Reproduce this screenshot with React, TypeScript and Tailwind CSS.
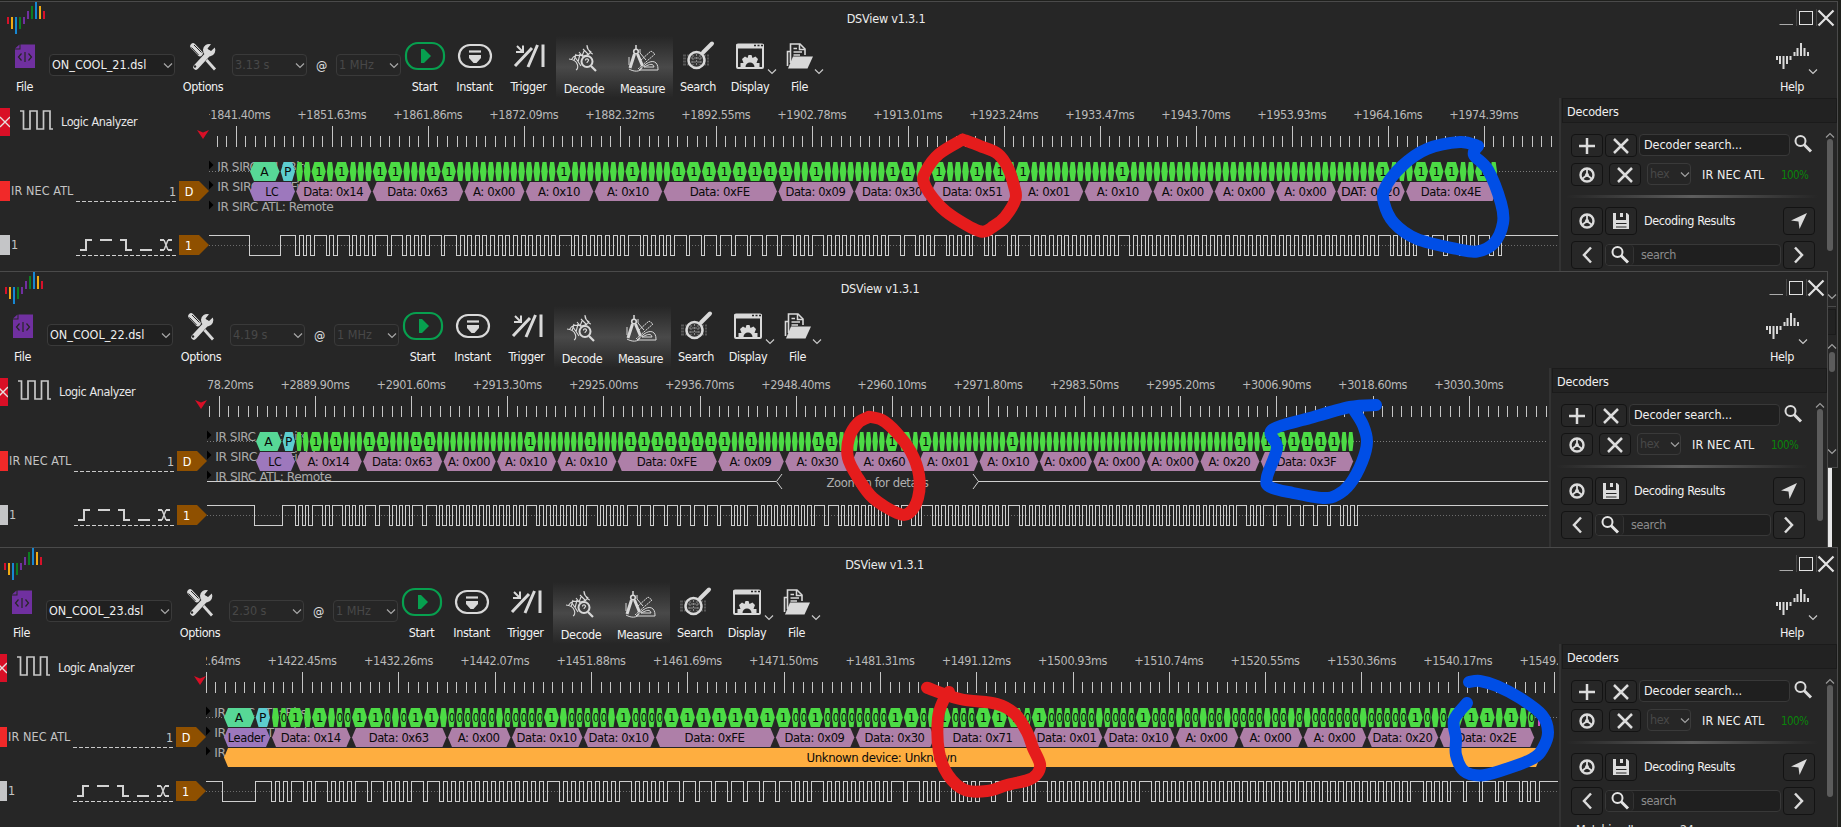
import type { ReactNode } from "react";

type Capture = {
  file: string;
  duration: string;
  x0: number;
  width: number;
  tick0: number;
  tickPitch: number;
  firstMs: number;
  stepMs: number;
  bytes: string[];
  start: number;
  unit: number;
  leader: [number, number];
  split: number;
  leaderText: string;
  low: number;
  rise: number;
  plainZeros?: number[];
};

const captures: Capture[] = [
  {
    file: "ON_COOL_21.dsl", duration: "3.13 s", x0: 209, width: 1349,
    tick0: 236.3, tickPitch: 96, firstMs: 1841.4, stepMs: 10.23,
    bytes: ["D14", "D63", "A00", "A10", "A10", "DFE", "D09", "D30", "D51", "A01", "A10", "A00", "A00", "A00", "T20", "D4E"],
    start: 296.2, unit: 7.655, leader: [250, 295], split: 280, leaderText: "LC", low: 249.5, rise: 280.5,
  },
  {
    file: "ON_COOL_22.dsl", duration: "4.19 s", x0: 207, width: 1341,
    tick0: 219.3, tickPitch: 96.15, firstMs: 2878.2, stepMs: 11.7,
    bytes: ["A14", "D63", "A00", "A10", "A10", "DFE", "A09", "A30", "A60", "A01", "A10", "A00", "A00", "A00", "A20", "D3F"],
    start: 296.2, unit: 6.699, leader: [256, 295], split: 282, leaderText: "LC", low: 254.5, rise: 282.5,
  },
  {
    file: "ON_COOL_23.dsl", duration: "2.30 s", x0: 206, width: 1352,
    tick0: 206.3, tickPitch: 96.3, firstMs: 1412.64, stepMs: 9.81,
    bytes: ["D14", "D63", "A00", "D10", "D10", "DFE", "D09", "D30", "D71", "D01", "D10", "A00", "A00", "A00", "D20", "D2E"],
    start: 272, unit: 7.998, leader: [224, 270], split: 255, leaderText: "Leader", low: 222.5, rise: 255.5,
    plainZeros: [0, 3, 5, 11, 15, 22, 29, 35, 63, 79, 88, 91, 94, 99, 102, 104, 111, 119, 124, 126],
  },
];

const hex = (a: number, b: number, y: number, h: number) => {
  const t = Math.min(4, (b - a) * 0.2);
  const m = y + h / 2;
  return `${a},${m} ${a + t},${y} ${b - t},${y} ${b},${m} ${b - t},${y + h} ${a + t},${y + h}`;
};

function Label({ x, y, w, anchor = "middle", fill = "#0a0a0a", children }: { x: number; y: number; w: number; anchor?: "start" | "middle"; fill?: string; children: string }) {
  return (
    <text x={x} y={y} textAnchor={anchor} fill={fill} fontSize={12.5} textLength={w} lengthAdjust="spacingAndGlyphs">
      {children}
    </text>
  );
}

function Trace({ c, index }: { c: Capture; index: number }) {
  const end = c.x0 + c.width;
  const ticks: ReactNode[] = [];
  for (let i = -3; i < 145; i++) {
    const x = Math.floor(c.tick0 + (i * c.tickPitch) / 10);
    if (x < c.x0 || x >= end) continue;
    ticks.push(<rect key={i} x={x} y={i % 10 === 0 ? 126 : 136} width={1} height={i % 10 === 0 ? 21 : 11} fill="#c6c6c6" />);
  }
  const times: ReactNode[] = [];
  for (let i = 0; i < 15 && c.tick0 + i * c.tickPitch < end; i++) {
    times.push(
      <Label key={i} x={c.tick0 + i * c.tickPitch - 0.5} y={119} w={69} fill="#b9b9b9">
        {`+${(c.firstMs + i * c.stepMs).toFixed(2)}ms`}
      </Label>,
    );
  }
  let x = c.start;
  let n = 0;
  let wave = `M${c.x0} 235.5H${c.low}V255.5H${c.rise}V235.5`;
  const bits: ReactNode[] = [];
  const data: ReactNode[] = [];
  for (const item of c.bytes) {
    const v = parseInt(item.slice(1), 16);
    const from = x;
    for (let b = 0; b < 8; b++, n++) {
      const one = (v >> b) & 1;
      const w = c.unit * (one ? 2 : 1);
      bits.push(<polygon key={n} points={hex(x, x + w - 1, 162, 19)} fill="#4cdb45" />);
      if (one) bits.push(<Label key={`t${n}`} x={x + w / 2 - 0.5} y={176} w={7}>1</Label>);
      else if (c.plainZeros && !c.plainZeros.includes(n)) bits.push(<Label key={`t${n}`} x={x + w / 2 - 0.2} y={176} w={6}>0</Label>);
      const down = Math.floor(x - 0.6) + 0.5;
      const up = Math.floor(x - 0.6 + c.unit * 0.48) + 0.5;
      wave += `H${down}V255.5H${up}V235.5`;
      x += w;
    }
    const kind = item[0];
    data.push(<polygon key={`h${n}`} points={hex(from, x - 1.5, 182, 19)} fill="#ae7fa8" />);
    data.push(
      <Label key={`d${n}`} x={(from + x) / 2 - 1.3} y={196} w={kind === "D" ? 60 : kind === "T" ? 59 : 42}>
        {`${kind === "D" ? "Data" : kind === "T" ? "DAT" : "A"}: 0x${item.slice(1)}`}
      </Label>,
    );
  }
  wave += `H${Math.floor(x) + 0.5}V255.5H${Math.floor(x + c.unit * 0.5) + 0.5}V235.5H${end}`;
  const lx = c.x0 + 8.3;
  return (
    <svg width={c.width} height={173} viewBox={`${c.x0} 98 ${c.width} 173`} className="block shrink-0">
      {times}
      <g shapeRendering="crispEdges">{ticks}</g>
      <path d={`M${c.x0} 171.5H${end}`} stroke="#7c7c7c" strokeDasharray="1 2" shapeRendering="crispEdges" />
      <Label x={lx} y={170.5} w={92} anchor="start" fill="#a9a9a9">IR SIRC ATL: Bits</Label>
      <Label x={lx} y={190.5} w={106} anchor="start" fill="#a9a9a9">IR SIRC ATL: Fields</Label>
      <Label x={lx} y={210.5} w={116} anchor="start" fill="#a9a9a9">IR SIRC ATL: Remote</Label>
      {[165, 185, 205].map((y) => (
        <polygon key={y} points={`${c.x0},${y - 4.5} ${c.x0 + 4.5},${y} ${c.x0},${y + 4.5}`} fill="#000" />
      ))}
      <rect x={c.split - 22} y={170} width={x - c.split + 20} height={3} fill="#262626" />
      <polygon points={hex(c.leader[0], c.split - 0.5, 162, 19)} fill="#57d896" />
      <Label x={(c.leader[0] + c.split) / 2 - 0.7} y={176} w={8}>A</Label>
      <polygon points={hex(c.split + 0.7, c.leader[1], 162, 19)} fill="#5ccdcf" />
      <Label x={(c.split + c.leader[1]) / 2} y={176} w={7}>P</Label>
      <polygon points={hex(c.leader[0], c.leader[1], 182, 19)} fill="#9d78bd" />
      <Label x={(c.leader[0] + c.leader[1]) / 2 - 0.7} y={196} w={c.leaderText === "LC" ? 13 : 37}>{c.leaderText}</Label>
      {bits}
      {data}
      {index === 1 && (
        <g fill="none" stroke="#d0d0d0">
          <path d="M207 211.5H776M978 211.5H1549" shapeRendering="crispEdges" />
          <path d="M782 204L776.5 211.5L782 219M973 204L978.500 211.5L973 219" />
        </g>
      )}
      {index === 1 && <Label x={877.500} y={217} w={102} fill="#b0b0b0">Zoom in for details</Label>}
      {index === 2 && (
        <g>
          <polygon points={hex(224, 1540, 202, 19)} fill="#feae40" />
          <rect x={1538} y={163} width={2} height={17} fill="#d24fc4" />
          <Label x={881.500} y={215.5} w={150}>Unknown device: Unknown</Label>
        </g>
      )}
      <path d={`M${c.x0} 245.5H${end}`} stroke="#6c6c6c" strokeDasharray="1 2" shapeRendering="crispEdges" />
      <path d={wave} fill="none" stroke="#cfcfcf" shapeRendering="crispEdges" />
    </svg>
  );
}

function Chevron({ className = "" }: { className?: string }) {
  return (
    <svg width="10" height="7" viewBox="0 0 10 7" className={className} fill="none" stroke="currentColor" strokeWidth="1.2">
      <path d="M1 1.500L5 5.500L9 1.500" />
    </svg>
  );
}

function Combo({ text, className, dim = false }: { text: string; className: string; dim?: boolean }) {
  return (
    <div className={`mt-[18px] flex h-[22px] shrink-0 items-center justify-between rounded-sm border border-[#3a3a3a] pr-[1px] pl-[2px] tracking-[0px] whitespace-nowrap ${dim ? "bg-[#262626] text-[#484848]" : "bg-[#202020] text-[#efefef]"} ${className}`}>
      {text}
      <Chevron className="text-[#a8a8a8]" />
    </div>
  );
}

function Tool({ label, className, children, arrow = false, active = false }: { label: string; className: string; children: ReactNode; arrow?: boolean; active?: boolean }) {
  return (
    <div className={`relative flex h-[62px] shrink-0 flex-col items-center ${active ? "bg-linear-to-b from-[#262626] via-[#494949] to-[#262626] pt-[2px] pr-[2px]" : ""} ${className}`}>
      <svg width="42" height="36" viewBox="0 0 42 36" className="mt-[2px] shrink-0 text-[#d9d9d9]" fill="none" stroke="currentColor">
        {children}
      </svg>
      <span className="mt-[5px] leading-4 text-[#f2f2f2]">{label}</span>
      {arrow && <Chevron className="absolute right-0 bottom-[23px] text-[#c8c8c8]" />}
    </div>
  );
}

function Logo() {
  const bars: [number, number, number, string][] = [
    [7, 15, 7, "#d7112a"], [11, 15, 12, "#f2ab13"], [15, 15, 17, "#1787d2"], [19, 15, 12, "#0c7c21"], [23, 15, 7, "#7030a0"],
    [27, 9, 8, "#7030a0"], [31, 4, 13, "#0c7c21"], [35, 0, 17, "#1787d2"], [39, 4, 13, "#f2ab13"], [43, 9, 8, "#d7112a"],
  ];
  return (
    <svg width="48" height="34" viewBox="0 0 48 34" className="shrink-0">
      {bars.map(([x, y, h, fill]) => <rect key={x} x={x} y={y} width={2} height={h} fill={fill} />)}
    </svg>
  );
}

function TitleBar() {
  return (
    <div className="flex h-[34px] shrink-0">
      <Logo />
      <div className="-ml-[50px] flex-1 pt-[9px] text-center leading-4 tracking-[-0.2px] text-[#ececec]">DSView v1.3.1</div>
      <svg width="63" height="30" viewBox="0 0 63 30" className="shrink-0" fill="none" stroke="#e2e2e2">
        <path d="M5.500 22.500H19" stroke="#aaa" />
        <path d="M22.500 7V24M42.500 7V24" stroke="#484848" />
        <rect x="25.500" y="9.500" width="13" height="13" />
        <path d="M44.500 8.500L59.500 23.500M59.500 8.500L44.500 23.500" strokeWidth="2.200" />
      </svg>
    </div>
  );
}

function Toolbar({ c }: { c: Capture }) {
  return (
    <div className="flex h-[62px] shrink-0 pl-[3px]">
      <Tool label="File" className="w-[43px]">
        <g stroke="none">
          <path d="M16.500 6.500H31V30H11V11.500H16.500Z" fill="#7030a0" />
          <path d="M11 10.500L15.500 6.500V10.500Z" fill="#7030a0" />
        </g>
        <path d="M17.500 15.500L14.500 19L17.500 22.500M24.500 15.500L27.500 19L24.500 22.500M21 14V24" stroke="#262626" strokeWidth="1.200" />
      </Tool>
      <Combo text={c.file} className="ml-[3px] w-[126px]" />
      <Tool label="Options" className="ml-[4px] w-[48px]">
        <path d="M14 29L27 15" strokeWidth="5.500" strokeLinecap="round" />
        <path d="M32.800 9.500L28.500 13.500L25.500 10.500L29 6.200A6.200 6.200 0 1 0 32.800 9.500Z" fill="currentColor" stroke="none" />
        <circle cx="13" cy="28.500" r="1.200" fill="#262626" stroke="none" />
        <path d="M11 8L18 15.500" strokeWidth="5.500" strokeLinecap="round" />
        <path d="M9.500 9.500L16.500 17M12 7L19.500 14.500" stroke="#262626" strokeWidth="1" />
        <path d="M24.500 22L33 31.500" strokeWidth="2.800" />
      </Tool>
      <Combo text={c.duration} className="ml-[5px] w-[75px]" dim />
      <div className="mt-[22px] w-[29px] shrink-0 text-center leading-4 text-[#e0e0e0]">@</div>
      <Combo text="1 MHz" className="w-[65px]" dim />
      <Tool label="Start" className="w-[47px]">
        <rect x="2" y="5" width="38" height="26" rx="12" stroke="#07a04f" strokeWidth="2.200" />
        <path d="M17 11V25L20 25L27 18L20 11Z" fill="#07a04f" stroke="none" />
      </Tool>
      <Tool label="Instant" className="w-[53px]">
        <rect x="5" y="7" width="32" height="22" rx="11" strokeWidth="2.200" />
        <path d="M15 13.500H27" strokeWidth="2.200" />
        <path d="M15 17H27V20L22.500 25H19.500L15 20Z" fill="currentColor" stroke="none" />
      </Tool>
      <Tool label="Trigger" className="w-[55px]">
        <path d="M7 28L24 10M20 29L29.500 7M35 6.500V29" strokeWidth="3" />
        <path d="M9 8L14.500 13.500M8 14H15V7.500" strokeWidth="2" />
      </Tool>
      <Tool label="Decode" className="w-[58px]" active>
        <path d="M6 19C16 20 16 29 13 30M8.500 19.500C14 10 20 21 28 12C24 9 24 8 24 5M24 5C25 12 29 14 30 14M12 17L18 26M16 12L21 18M20 9L26 15M13 14L11 21M17 14L15 22M21 11L19 16" strokeWidth="1.100" />
        <circle cx="24" cy="21.500" r="5.500" strokeWidth="2" fill="#404040" />
        <path d="M28 26L33 31" strokeWidth="2.200" />
        <path d="M22.500 20.500C22.500 18 25.800 18.500 25.500 20.500C25.200 21.500 24 21.500 24 23" strokeWidth="1.200" />
      </Tool>
      <Tool label="Measure" className="w-[59px]" active>
        <path d="M14 5V9" strokeWidth="1.500" />
        <circle cx="14" cy="11.500" r="2.300" strokeWidth="1.600" />
        <path d="M12.500 14L8 28M15.500 14L20.500 26" strokeWidth="3" />
        <path d="M7 29C12 32 18 32 20 28M7 17V25M18 13L24 20M18 9V13M17 30H36V29C36 22 31 19 24 24L17 30M22 27H32C31 23 28 24 22 27" strokeWidth="1" />
        <path d="M16 29L33 14L29 11L19 20" strokeWidth="1" strokeDasharray="2 .6" />
      </Tool>
      <Tool label="Search" className="w-[50px]">
        <path d="M6 17.500H32M6 20.500H32M6 23.500H32M6 26.500H32" strokeWidth="2" stroke="#565656" strokeDasharray="3 1" />
        <circle cx="19.500" cy="22" r="8" strokeWidth="2.500" fill="#353535" />
        <path d="M16 17V27M19.500 16V28M23 17V27M14 20H25M14 24H25" stroke="#888" strokeDasharray="2 1" />
        <path d="M26 14.500L35 5.500" strokeWidth="4" strokeLinecap="round" />
      </Tool>
      <Tool label="Display" className="w-[54px]" arrow>
        <rect x="8" y="6.500" width="26" height="23.500" rx="1" strokeWidth="2" />
        <path d="M7 8.500H35" strokeWidth="4" />
        <path d="M25 7.500H27M28.500 7.500H30.500M32 7.500H34" stroke="#262626" strokeWidth="1.500" />
        <path d="M11.500 29V25H14.500L13 21L16 18.500L18.500 20L19.500 17H22.500L23.500 20L26.500 18.500L29 21L27.500 25H30.500V29H25.500A4.500 4.500 0 0 0 16.500 29Z" fill="currentColor" stroke="none" />
      </Tool>
      <Tool label="File" className="w-[47px] pr-[2px]" arrow>
        <path d="M8.500 28V13.500H12M11.500 25V6H21L26 11V17" strokeWidth="1.600" />
        <path d="M20.500 6V11.500H26M14.500 10.500H18M14.500 14H23M14.500 17H21" strokeWidth="1.500" />
        <path d="M14 18.500H34L28.500 30.500H9Z" fill="currentColor" stroke="none" />
      </Tool>
      <div className="flex-1" />
      <Tool label="Help" className="mr-[19px] w-[52px]" arrow>
        <path d="M6 18V22M9 18V26M12.500 18V31M16 18V26M19.500 18V22M23.500 14V18M26.500 10V18M30 5V18M33.500 10V18M37 14V18" strokeWidth="2" />
      </Tool>
    </div>
  );
}

function Tag({ text }: { text: string }) {
  return (
    <svg width="30" height="20" viewBox="0 0 30 20" className="ml-[3px] shrink-0">
      <path d="M0 0H20L30 10L20 20H0Z" fill="#8f5000" />
      <text x={text === "1" ? 9.500 : 10} y="14.500" textAnchor="middle" fontSize="12.500" fill="#fff">{text}</text>
    </svg>
  );
}

function ChannelPanel() {
  return (
    <div className="flex w-[209px] shrink-0 flex-col text-[#c4c4c4]">
      <div className="flex h-[49px] items-start">
        <svg width="10" height="28" viewBox="0 0 10 28" className="mt-[10px] shrink-0">
          <rect width="10" height="28" fill="#d90f26" />
          <path d="M0 9L10 19M10 9L0 19" stroke="#e8e0e0" strokeWidth="1.300" />
        </svg>
        <svg width="34" height="22" viewBox="0 0 34 22" className="mt-[11px] ml-[10px] shrink-0" fill="none" stroke="#c8c8c8" strokeWidth="1.700">
          <path d="M0 2H3.500V20H10V2H17V20H23.500V2H30V20H33" />
        </svg>
        <span className="mt-[16px] ml-[7px] w-[136px] leading-4 text-[#e6e6e6]">Logic Analyzer</span>
        <svg width="12" height="10" viewBox="0 0 12 10" className="mt-[31px] shrink-0">
          <path d="M0 1L6 3.500L12 1L6 10Z" fill="#d90f26" />
        </svg>
      </div>
      <div className="mt-[34px] flex h-[21px] items-start">
        <div className="h-[20px] w-[10px] bg-[#f12929]" />
        <span className="w-[66px] pt-[2px] pl-px leading-4 tracking-[0.1px] whitespace-nowrap">IR NEC ATL</span>
        <svg width="100" height="21" viewBox="0 0 100 21" className="shrink-0">
          <path d="M0 20.500H100" stroke="#c8c8c8" strokeDasharray="4 2" />
          <text x="93" y="15" fontSize="12.500" fill="#c4c4c4">1</text>
        </svg>
        <Tag text="D" />
      </div>
      <div className="mt-[33px] flex h-[21px] items-start">
        <div className="h-[20px] w-[10px] bg-[#c4c5c7]" />
        <span className="w-[66px] pt-[2px] pl-px leading-4">1</span>
        <svg width="100" height="21" viewBox="0 0 100 21" className="shrink-0" fill="none" stroke="#d2d2d2">
          <path d="M0 20.500H100" strokeDasharray="4 2" />
          <path d="M4 15H10V5H16M24 5H36M44 5H50V15H56M64 15H76M84 5H88M92 5H96M84 15H88M92 15H96" strokeWidth="2" />
          <path d="M88 5L92 15M92 5L88 15" strokeWidth="1.500" />
        </svg>
        <Tag text="1" />
      </div>
    </div>
  );
}

function Btn({ className = "", children }: { className?: string; children: ReactNode }) {
  return (
    <div className={`flex w-[32px] shrink-0 items-center justify-center rounded-[4px] border border-[#131313] bg-[#272727] ${className}`}>
      <svg width="20" height="20" viewBox="0 0 20 20" fill="none" stroke="#dcdcdc" strokeWidth="2.500">{children}</svg>
    </div>
  );
}

const plus = <path d="M2 10H18M10 2V18" />;
const cross = <path d="M3 3L17 17M17 3L3 17" />;
const wheel = (
  <>
    <circle cx="10" cy="10" r="6.500" strokeWidth="2.400" />
    <path d="M10 10V4M10 10L5 14M10 10L15 14" strokeWidth="1.800" />
    <circle cx="10" cy="10" r="2" fill="#dcdcdc" stroke="none" />
  </>
);
const lens = (
  <>
    <circle cx="7.500" cy="7" r="5" strokeWidth="2" />
    <path d="M11 10.500L18 17.500" strokeWidth="3" />
  </>
);

function ScrollBar() {
  return (
    <div className="flex w-[15px] shrink-0 flex-col items-center pt-[9px] text-[#999]">
      <Chevron className="rotate-180" />
      <div className="h-[112px] w-[6px] rounded-full bg-[#5c5c5c]" />
    </div>
  );
}

function Dock() {
  return (
    <div className="flex w-[275px] shrink-0 flex-col text-[#f0f0f0]">
      <div className="h-[25px] shrink-0 border border-[#1b1b1b] bg-[#222] pt-[5px] pl-[4px] leading-4 tracking-[-0.2px]">Decoders</div>
      <div className="flex flex-1">
        <div className="flex w-[260px] shrink-0 flex-col pl-[9px]">
          <div className="mt-[11px] flex h-[23px]">
            <Btn>{plus}</Btn>
            <Btn className="ml-[2px]">{cross}</Btn>
            <div className="ml-[2px] h-[22px] w-[151px] rounded-sm border border-[#383838] bg-[#1f1f1f] pt-[2px] pl-[4px] leading-4 tracking-[-0.05px]">Decoder search...</div>
            <svg width="20" height="20" viewBox="0 0 20 20" className="ml-[3px]" fill="none" stroke="#dcdcdc">{lens}</svg>
          </div>
          <div className="mt-[6px] flex h-[23px]">
            <Btn>{wheel}</Btn>
            <Btn className="ml-[6px]">{cross}</Btn>
            <div className="ml-[6px] flex h-[22px] w-[44px] items-center justify-between rounded-sm border border-[#3a3a3a] pl-[2px] text-[#484848]">
              hex
              <Chevron className="text-[#a0a0a0]" />
            </div>
            <span className="mt-[4px] ml-[11px] w-[79px] leading-4 tracking-[0.1px]">IR NEC ATL</span>
            <span className="mt-[4px] text-[11.500px] leading-4 tracking-[-0.6px] text-[#0a840a]">100%</span>
          </div>
          <div className="mt-[9px] -ml-[5px] h-[3px] w-[252px] bg-linear-to-r from-[#262626] via-[#5e5e5e] to-[#262626]" />
          <div className="mt-[9px] flex h-[28px]">
            <Btn>{wheel}</Btn>
            <Btn className="ml-[2px]">
              <path d="M2 2H5V9H15V2H16L18 4V18H2Z" fill="#dcdcdc" stroke="none" />
              <path d="M10.500 2V6" strokeWidth="3" />
              <path d="M5 12.500H15.500M5 16H15.500" stroke="#262626" strokeWidth="1.200" />
            </Btn>
            <span className="mt-[6px] ml-[7px] w-[139px] leading-4 tracking-[-0.4px]">Decoding Results</span>
            <Btn>
              <path d="M18 2L2 9.500L9.500 10.500L10.500 18Z" fill="#dcdcdc" stroke="none" />
            </Btn>
          </div>
          <div className="mt-[6px] flex h-[28px]">
            <Btn><path d="M14 2.500L7 10L14 17.500" /></Btn>
            <div className="mt-[3px] ml-[2px] flex h-[22px] w-[176px] rounded-sm border border-[#383838] bg-[#1f1f1f]">
              <div className="flex w-[28px] justify-center rounded-[4px] border-r border-[#333] bg-[#232323]">
                <svg width="20" height="20" viewBox="0 0 20 20" fill="none" stroke="#e4e4e4">{lens}</svg>
              </div>
              <span className="mt-[2px] ml-[7px] leading-4 text-[#8c8c8c]">search</span>
            </div>
            <Btn className="ml-[2px]"><path d="M6 2.500L13 10L6 17.500" /></Btn>
          </div>
          <div className="mt-[7px] flex pl-[5px] leading-4 text-[#e4e4e4]">
            <span className="w-[104px]">Matching Items:</span>
            <span>24</span>
          </div>
        </div>
        <ScrollBar />
      </div>
    </div>
  );
}

function AppWindow({ index, className }: { index: number; className: string }) {
  const c = captures[index];
  return (
    <section className={`absolute flex flex-col overflow-hidden border-t border-r border-[#4a4a4a] bg-[#262626] ${className}`}>
      <TitleBar />
      <Toolbar c={c} />
      <div className="flex min-h-0 flex-1 overflow-hidden">
        <ChannelPanel />
        <Trace c={c} index={index} />
        <div className="mx-px w-[2px] shrink-0 bg-[#333]" />
        <Dock />
      </div>
    </section>
  );
}

const smooth = (p: number[][]) => {
  let d = `M${p[0][0]} ${p[0][1]}`;
  for (let i = 0; i < p.length - 1; i++) {
    const a = p[Math.max(0, i - 1)], b = p[i], c = p[i + 1], e = p[Math.min(p.length - 1, i + 2)];
    d += `C${b[0] + (c[0] - a[0]) / 6} ${b[1] + (c[1] - a[1]) / 6} ${c[0] - (e[0] - b[0]) / 6} ${c[1] - (e[1] - b[1]) / 6} ${c[0]} ${c[1]}`;
  }
  return d;
};

const redMarks = [
  [[962.7, 139.5], [980, 146], [998, 154], [1008, 168], [1014, 186], [1015.5, 199], [1005, 217], [994, 226], [981, 231.500], [955, 218], [938, 204], [924, 183], [926, 171], [939, 154], [962.7, 139.5]],
  [[869, 416.7], [882, 420], [896, 432], [911, 452], [919, 475], [918, 498], [909, 513], [897, 513], [873, 498], [858, 478], [848, 458], [849, 438], [858, 423], [869, 417]],
  [[927, 687.7], [960, 699], [997, 704], [1015, 714], [1027, 732], [1033, 748], [1040, 764], [1037, 774], [1028, 780], [1007, 785], [987, 791], [965, 790], [948, 775], [939, 752], [938, 718], [944, 699], [949, 692]],
];
const blueMarks = [
  [[1478, 146], [1460, 142], [1427, 149], [1402, 166], [1385, 188], [1384, 203], [1394, 223], [1417, 239], [1457, 249], [1477, 251.500], [1494, 243], [1503, 223], [1501, 203], [1488, 170], [1474, 155], [1478, 146]],
  [[1376, 405], [1350, 407], [1310, 418], [1272, 430], [1277, 448], [1267, 477], [1270, 487], [1293, 493], [1323, 498], [1337, 495], [1350, 484], [1362, 462], [1367, 442], [1363, 425], [1354, 410]],
  [[1469, 682], [1480, 681], [1497, 686], [1520, 698], [1542, 715], [1548, 732], [1543, 748], [1532, 759], [1500, 771], [1480, 775.500], [1464, 771], [1456, 755], [1456, 738], [1454, 720], [1467, 703]],
];

export default function App() {
  return (
    <main className="relative h-[827px] w-[1841px] overflow-hidden bg-[#1f201d] font-['DejaVu_Sans_Condensed','DejaVu_Sans',sans-serif] text-[12.500px] [font-stretch:condensed] tracking-[-0.4px]">
      <AppWindow index={0} className="top-[1px] left-0 h-[467px] w-[1838px] border-b" />
      <div className="absolute top-[468px] left-[1827px] h-[80px] w-[5px] bg-[#e8e8e8]" />
      <div className="absolute top-[271px] left-[1827px] flex h-[196px] w-[9px] flex-col items-center text-[#a0a0a0]">
        <Chevron className="mt-[22px] shrink-0" />
        <div className="mt-[6px] h-px w-full shrink-0 bg-[#4a4a4a]" />
        <div className="mt-[2px] h-[26px] w-full shrink-0 border border-[#1b1b1b] bg-[#222]" />
        <Chevron className="mt-[8px] shrink-0 rotate-180" />
        <div className="mt-[2px] h-[20px] w-[6px] shrink-0 rounded-full bg-[#5c5c5c]" />
        <Chevron className="mt-[76px] shrink-0" />
      </div>
      <AppWindow index={1} className="top-[271px] left-[-2px] h-[400px] w-[1830px]" />
      <AppWindow index={2} className="top-[547px] left-[-3px] h-[400px] w-[1841px]" />
      <svg width="1841" height="827" viewBox="0 0 1841 827" className="absolute inset-0" fill="none" strokeWidth="12" strokeLinecap="round" strokeLinejoin="round">
        {redMarks.map((p, i) => <path key={i} d={smooth(p)} stroke="#e51c1c" />)}
        {blueMarks.map((p, i) => <path key={i} d={smooth(p)} stroke="#004ee6" />)}
      </svg>
    </main>
  );
}
